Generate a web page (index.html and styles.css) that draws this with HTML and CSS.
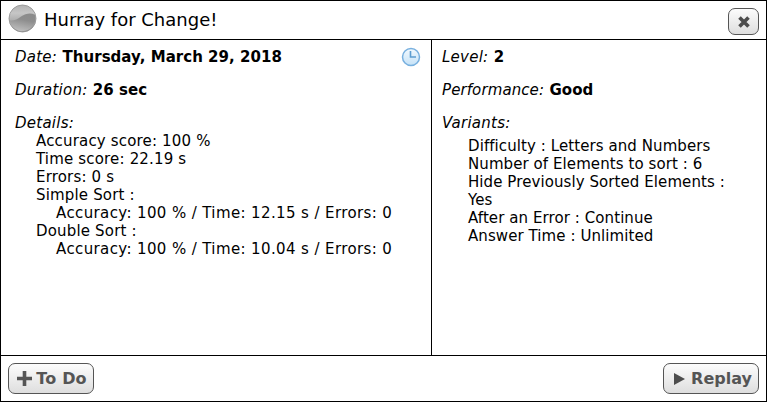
FILE: index.html
```html
<!DOCTYPE html>
<html lang="en">
<head>
<meta charset="utf-8">
<title>Hurray for Change!</title>
<link rel="stylesheet" href="styles.css">
</head>
<body>
<main class="dialog">
  <header class="header">
    <svg class="orb" viewBox="0 0 30 30">
      <defs>
        <linearGradient id="base" x1="0" y1="0" x2="0" y2="1"><stop offset="0" stop-color="#b2b2b2"/><stop offset=".3" stop-color="#c6c6c6"/><stop offset=".6" stop-color="#ababab"/><stop offset="1" stop-color="#8c8c8c"/></linearGradient>
        <linearGradient id="shade" x1=".8" y1="0" x2=".5" y2="1"><stop offset="0" stop-color="#8b8b8b"/><stop offset=".4" stop-color="#8e8e8e"/><stop offset="1" stop-color="#bcbcbc"/></linearGradient>
      </defs>
      <circle cx="15" cy="15" r="14" fill="url(#base)" stroke="#8c8c8c" stroke-width=".8"/>
      <path d="M1.500 17c5 .5 8-1 12-4 5-3.500 10-4 14.300-2A13.500 13.500 0 1 1 1.500 17z" fill="url(#shade)"/>
    </svg>
    <h1 class="title">Hurray for Change!</h1>
    <button class="button close" aria-label="Close"><svg width="12" height="12" viewBox="0 0 12 12"><path d="M1.500 1.500l9 9M10.500 1.500l-9 9" stroke="#4d4d4d" stroke-width="3.600"/></svg></button>
  </header>
  <div class="content">
    <section class="results">
      <div class="row date"><p><i>Date:</i> <b>Thursday, March 29, 2018</b></p>
        <svg class="clock" viewBox="0 0 20 20">
          <defs><linearGradient id="face" x1="0" y1="0" x2="0" y2="1"><stop offset="0" stop-color="#f2f9fe"/><stop offset="1" stop-color="#c5e2f7"/></linearGradient></defs>
          <circle cx="10" cy="10" r="8.500" fill="url(#face)" stroke="#78b0df" stroke-width="1.500"/>
          <path d="M9.500 4v6H15" fill="none" stroke="#5d9dd1" stroke-width="1.600"/>
        </svg>
      </div>
      <p class="row"><i>Duration:</i> <b>26 sec</b></p>
      <p class="label"><i>Details:</i></p>
      <ul class="details">
        <li>Accuracy score: 100 %</li>
        <li>Time score: 22.19 s</li>
        <li>Errors: 0 s</li>
        <li>Simple Sort :<div class="nested">Accuracy: 100 % / Time: 12.15 s / Errors: 0</div></li>
        <li>Double Sort :<div class="nested">Accuracy: 100 % / Time: 10.04 s / Errors: 0</div></li>
      </ul>
    </section>
    <section class="settings">
      <p class="row"><i>Level:</i> <b>2</b></p>
      <p class="row"><i class="tight">Performance:</i> <b>Good</b></p>
      <p class="label"><i>Variants:</i></p>
      <ul class="variants">
        <li>Difficulty : Letters and Numbers</li>
        <li>Number of Elements to sort : 6</li>
        <li>Hide Previously Sorted Elements :<br>Yes</li>
        <li>After an Error : Continue</li>
        <li>Answer Time : Unlimited</li>
      </ul>
    </section>
  </div>
  <footer class="footer">
    <button class="button todo"><svg width="15" height="15" viewBox="0 0 15 15"><path d="M7.500 0v15M0 7.500h15" stroke="#555" stroke-width="3.600"/></svg><span>To Do</span></button>
    <button class="button replay"><svg width="11" height="12" viewBox="0 0 11 12"><path d="M0 0v12L11 6z" fill="#4d4d4d"/></svg><span>Replay</span></button>
  </footer>
</main>
</body>
</html>
```
FILE: styles.css
```css
* { box-sizing: border-box; }
body { margin: 0; background: #fff; color: #000; font: 15px/18px Verdana, "DejaVu Sans", sans-serif; }
h1, p, ul { margin: 0; padding: 0; }
ul { list-style: none; }
svg { display: block; flex: none; }
i { letter-spacing: .25px; margin-right: .6px; }
.tight { letter-spacing: .1px; }
b { letter-spacing: .03px; }
.dialog { width: 767px; height: 402px; border: 1px solid #000; display: grid; grid-template-rows: 39px 316px 1fr; }
.header { display: flex; align-items: center; border-bottom: 1px solid #000; padding: 0 7px 0 7px; }
.orb { width: 29px; height: 29px; margin-bottom: 3px; }
.title { margin-left: 7px; font-size: 18px; line-height: 22px; font-weight: 400; white-space: nowrap; }
.content { display: grid; grid-template-columns: 431px 1fr; border-bottom: 1px solid #000; white-space: nowrap; }
.results { border-right: 1px solid #000; padding: 8px 10px 0 14px; }
.settings { padding: 8px 0 0 10px; }
.row { height: 33px; }
.date { display: flex; justify-content: space-between; }
.clock { width: 20px; height: 20px; margin-top: -1px; }
.label { height: 18px; }
.details { padding-left: 21px; letter-spacing: .17px; }
.nested { padding-left: 20px; letter-spacing: .38px; }
.variants { padding: 5px 0 0 26px; letter-spacing: .08px; }
.footer { display: flex; justify-content: space-between; align-items: center; padding: 0 7px; }
.button { display: flex; align-items: center; justify-content: center; border: 1px solid #555; border-radius: 7px; padding: 0; background: linear-gradient(#fcfcfc, #dedede); color: #555; font: bold 16px/20px Verdana, "DejaVu Sans", sans-serif; white-space: nowrap; }
.close { width: 31px; height: 27px; margin: 3px 0 0 auto; }
.todo { width: 86px; height: 31px; gap: 4px; padding-left: 2px; letter-spacing: .2px; }
.replay { width: 96px; height: 31px; gap: 6px; padding-left: 4px; }
```
